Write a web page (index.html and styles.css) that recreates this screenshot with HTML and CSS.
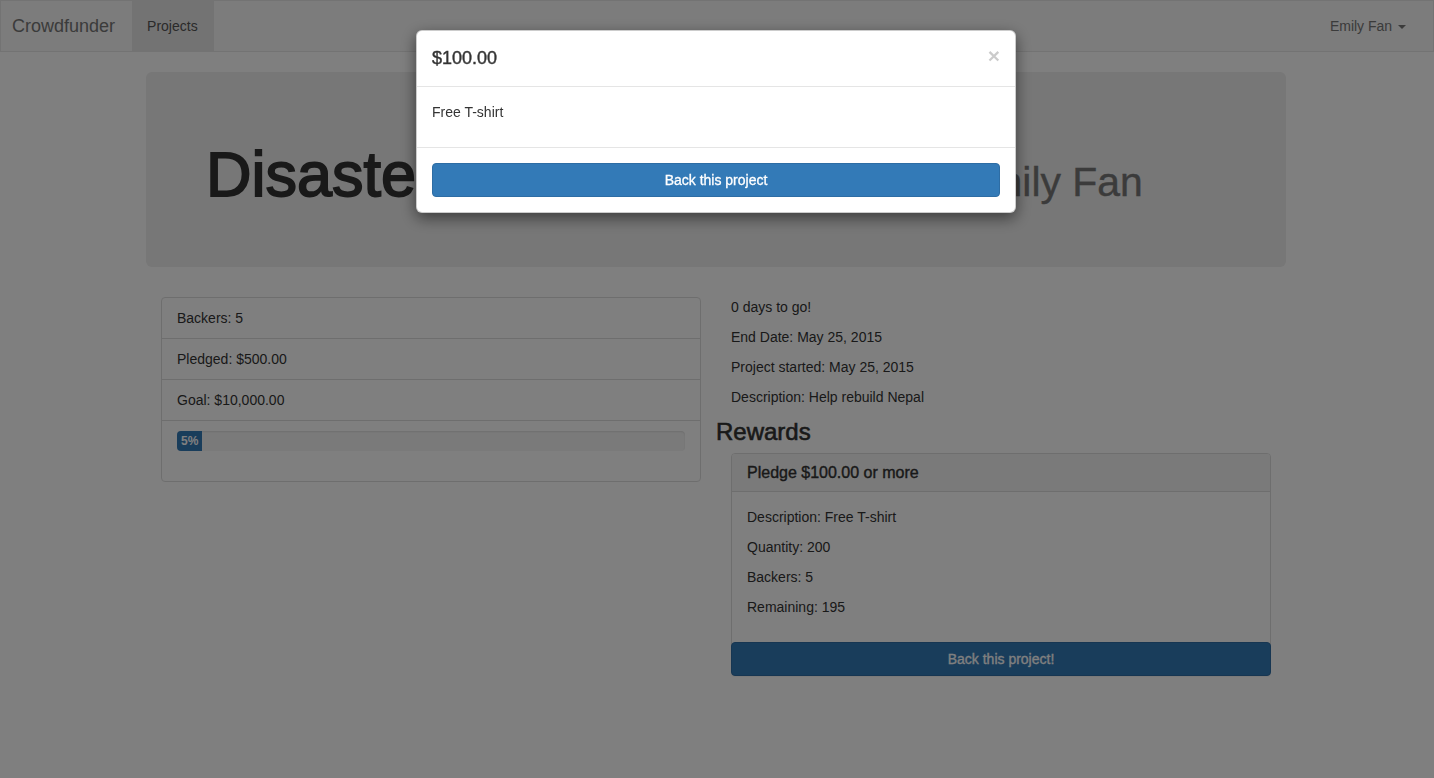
FILE: index.html
```html
<!DOCTYPE html>
<html lang="en">
<head>
<meta charset="utf-8">
<title>Crowdfunder</title>
<link rel="stylesheet" href="styles.css">
</head>
<body>
<nav class="navbar">
  <a class="navbar-brand" href="#">Crowdfunder</a>
  <a class="nav-link active" href="#">Projects</a>
  <a class="nav-user" href="#">Emily Fan <span class="caret"></span></a>
</nav>

<div class="page">
<div class="container">
  <div class="jumbotron">
    <h1 class="title">Disaster Relief for Nepal <small>by Emily Fan</small></h1>
  </div>

  <div class="row">
    <div class="col">
      <ul class="list-group">
        <li class="list-item">Backers: 5</li>
        <li class="list-item">Pledged: $500.00</li>
        <li class="list-item">Goal: $10,000.00</li>
        <li class="list-item">
          <div class="progress"><div class="progress-bar" style="width: 5%">5%</div></div>
        </li>
      </ul>
    </div>
    <div class="col">
      <p>0 days to go!</p>
      <p>End Date: May 25, 2015</p>
      <p>Project started: May 25, 2015</p>
      <p>Description: Help rebuild Nepal</p>
      <h3 class="rewards-title">Rewards</h3>
      <div class="panel">
        <div class="panel-heading"><h3 class="panel-title">Pledge $100.00 or more</h3></div>
        <div class="panel-body">
          <p>Description: Free T-shirt</p>
          <p>Quantity: 200</p>
          <p>Backers: 5</p>
          <p>Remaining: 195</p>
        </div>
        <button class="btn btn-primary btn-block btn-panel" type="button">Back this project!</button>
      </div>
    </div>
  </div>
</div>
</div>

<div class="backdrop"></div>

<div class="modal">
  <div class="modal-content">
    <div class="modal-header">
      <button class="close" type="button">&times;</button>
      <h4 class="modal-title">$100.00</h4>
    </div>
    <div class="modal-body">
      <p>Free T-shirt</p>
    </div>
    <div class="modal-footer">
      <button class="btn btn-primary btn-block btn-modal" type="button">Back this project</button>
    </div>
  </div>
</div>
</body>
</html>
```

FILE: styles.css
```css
* { box-sizing: border-box; }

html, body {
  margin: 0;
  padding: 0;
}

body {
  font-family: "Liberation Sans", Arial, Helvetica, sans-serif;
  font-size: 14px;
  line-height: 1.42857143;
  color: #333;
  background: #fff;
}

a { text-decoration: none; }

p { margin: 0 0 10px; }

/* Navbar */
.navbar {
  display: flex;
  align-items: stretch;
  height: 52px;
  background: #f8f8f8;
  border: 1px solid #e7e7e7;
  margin-bottom: 20px;
  padding-right: 12px;
}

.navbar-brand {
  font-size: 18px;
  line-height: 20px;
  padding: 15px 17px 15px 11px;
  color: #777;
}

.nav-link {
  padding: 15px 16px 15px 15px;
  line-height: 20px;
  color: #555;
}

.nav-link.active { background: #e7e7e7; }

.nav-user {
  margin-left: auto;
  padding: 15px;
  line-height: 20px;
  color: #777;
}

.caret {
  display: inline-block;
  width: 0;
  height: 0;
  margin-left: 2px;
  vertical-align: middle;
  border-top: 4px solid #777;
  border-left: 4px solid transparent;
  border-right: 4px solid transparent;
}

/* Layout */
.page {
  padding-right: 2px;
}

.container {
  width: 1140px;
  margin: 0 auto;
}

.jumbotron {
  background: #eee;
  border-radius: 6px;
  padding: 48px 60px;
  margin-bottom: 30px;
}

.title {
  font-size: 63px;
  line-height: 1.1;
  font-weight: 500;
  margin: 20px 0 10px;
  -webkit-text-stroke: 1.8px #333;
}

.title small {
  font-size: 65%;
  font-weight: 400;
  line-height: 1;
  color: #777;
  -webkit-text-stroke: 0.4px #777;
}

.row {
  display: flex;
}

.col {
  width: 570px;
  padding: 0 15px;
}

/* List group */
.list-group {
  list-style: none;
  margin: 0 0 20px;
  padding: 0;
  border: 1px solid #ddd;
  border-radius: 4px;
  background: #fff;
}

.list-item {
  padding: 10px 15px;
  line-height: 20px;
}

.list-item + .list-item { border-top: 1px solid #ddd; }

.progress {
  height: 20px;
  margin-bottom: 20px;
  background: #f5f5f5;
  border-radius: 4px;
  overflow: hidden;
  box-shadow: inset 0 1px 2px rgba(0, 0, 0, 0.1);
}

.progress-bar {
  height: 100%;
  background: #337ab7;
  color: #fff;
  font-size: 12px;
  line-height: 20px;
  text-align: center;
  font-weight: 700;
}

/* Rewards */
.rewards-title {
  font-size: 24px;
  line-height: 1.1;
  font-weight: 500;
  padding-top: 2px;
  margin: 0 0 7px -15px;
  -webkit-text-stroke: 0.6px #333;
}

.panel {
  border: 1px solid #ddd;
  border-radius: 4px;
  background: #fff;
  margin-bottom: 20px;
  box-shadow: 0 1px 1px rgba(0, 0, 0, 0.05);
}

.panel-heading {
  padding: 10px 15px;
  background: #f5f5f5;
  border-bottom: 1px solid #ddd;
  border-radius: 3px 3px 0 0;
}

.panel-title {
  margin: 0;
  font-size: 16px;
  line-height: 1.1;
  font-weight: 500;
  -webkit-text-stroke: 0.4px #333;
}

.panel-body { padding: 15px; }

/* Buttons */
.btn {
  display: inline-block;
  font-family: inherit;
  font-size: 14px;
  line-height: 20px;
  padding: 6px 12px;
  border: 1px solid transparent;
  border-radius: 4px;
  text-align: center;
  cursor: pointer;
}

.btn-primary {
  background: #337ab7;
  border-color: #2e6da4;
  color: #fff;
  -webkit-text-stroke: 0.3px #fff;
}

.btn-block {
  display: block;
  width: 100%;
}

.btn-panel {
  width: calc(100% + 2px);
  margin: 0 -1px -1px;
}

/* Modal */
.backdrop {
  position: fixed;
  inset: 0;
  background: #000;
  opacity: 0.5;
}

.modal {
  position: fixed;
  top: 30px;
  left: 50%;
  width: 600px;
  margin-left: -301px;
}

.modal-content {
  background: #fff;
  border: 1px solid rgba(0, 0, 0, 0.2);
  border-radius: 6px;
  box-shadow: 0 5px 15px rgba(0, 0, 0, 0.5);
}

.modal-header {
  padding: 15px;
  border-bottom: 1px solid #e5e5e5;
}

.modal-title {
  margin: 0;
  font-size: 18px;
  line-height: 25px;
  font-weight: 500;
  -webkit-text-stroke: 0.4px #333;
}

.close {
  float: right;
  margin-top: -1px;
  padding: 0;
  background: transparent;
  border: 0;
  font-family: inherit;
  font-size: 21px;
  font-weight: 700;
  line-height: 1;
  color: #000;
  opacity: 0.2;
  text-shadow: 0 1px 0 #fff;
  cursor: pointer;
}

.modal-body { padding: 15px; }

.modal-footer {
  padding: 15px;
  border-top: 1px solid #e5e5e5;
}
```
